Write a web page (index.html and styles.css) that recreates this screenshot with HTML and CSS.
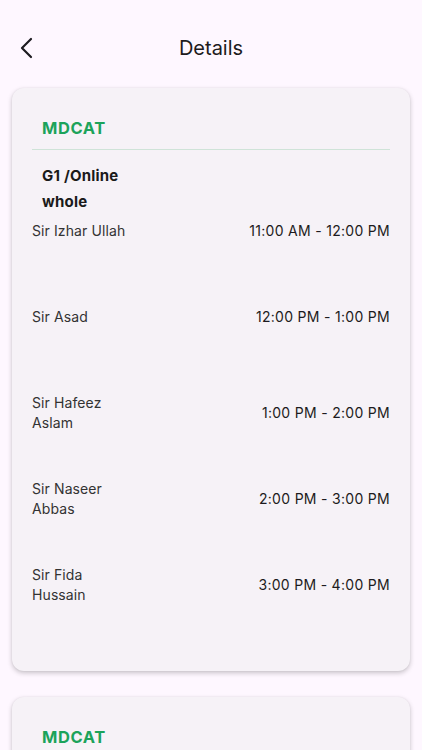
FILE: index.html
```html
<!DOCTYPE html>
<html>
<head>
<meta charset="utf-8">
<link rel="stylesheet" href="styles.css">
</head>
<body>
<header class="appbar">
  <svg class="back" width="24" height="24" viewBox="0 0 24 24"><polyline points="15,3 6,12 15,21" fill="none" stroke="#1d1b20" stroke-width="2.2" stroke-linecap="round" stroke-linejoin="round"/></svg>
  <h1 class="title">Details</h1>
</header>
<main class="list">
  <section class="card">
    <div class="course">MDCAT</div>
    <div class="divider"></div>
    <div class="group">
      <div>G1 /Online</div>
      <div>whole</div>
    </div>
    <div class="row"><div class="line"><span class="name">Sir Izhar Ullah</span><span class="time">11:00 AM - 12:00 PM</span></div></div>
    <div class="row"><div class="line"><span class="name">Sir Asad</span><span class="time">12:00 PM - 1:00 PM</span></div></div>
    <div class="row"><div class="line"><span class="name">Sir Hafeez Aslam</span><span class="time">1:00 PM - 2:00 PM</span></div></div>
    <div class="row"><div class="line"><span class="name">Sir Naseer Abbas</span><span class="time">2:00 PM - 3:00 PM</span></div></div>
    <div class="row"><div class="line"><span class="name">Sir Fida Hussain</span><span class="time">3:00 PM - 4:00 PM</span></div></div>
  </section>
  <section class="card card-partial">
    <div class="course">MDCAT</div>
  </section>
</main>
</body>
</html>
```
FILE: styles.css
```css
* { box-sizing: border-box; }
html, body { margin: 0; }
body {
  background: #fef7ff;
  font-family: Inter, "Noto Sans", sans-serif;
  color: #1d1b20;
  width: 422px;
  height: 750px;
  overflow: hidden;
}
.appbar {
  position: relative;
  height: 56px;
  margin-top: 20px;
  display: flex;
  align-items: center;
  justify-content: center;
}
.back {
  position: absolute;
  left: 16px;
  top: 16px;
}
.title {
  margin: 0;
  font-size: 20px;
  font-weight: 400;
  color: #1d1b20;
}
.list {
  padding: 12px 12px 0;
  display: flex;
  flex-direction: column;
  gap: 26px;
}
.card {
  background: #f6f2f7;
  border-radius: 12px;
  box-shadow: 0 2px 5px rgba(0,0,0,0.22), 0 0 2px rgba(0,0,0,0.06);
  padding: 20px;
}
.card-partial {
  height: 120px;
}
.course {
  padding: 10px 10px 11px;
  font-size: 16.5px;
  line-height: 20px;
  font-weight: 700;
  color: #1ca35b;
  letter-spacing: 0.6px;
}
.divider {
  height: 1px;
  background: #cfe3d8;
}
.group {
  margin-top: 13px;
  padding-left: 10px;
  font-size: 15px;
  line-height: 26px;
  font-weight: 700;
  color: #1a1a1a;
  letter-spacing: 0.2px;
}
.row {
  height: 86px;
}
.group + .row { margin-top: 6px; }
.line {
  display: flex;
  justify-content: space-between;
  align-items: center;
}
.name {
  width: 100px;
  font-size: 14px;
  line-height: 20px;
  color: #333;
  letter-spacing: 0.1px;
}
.time {
  font-size: 14px;
  line-height: 20px;
  color: #1d1b20;
  letter-spacing: 0.3px;
}
```
